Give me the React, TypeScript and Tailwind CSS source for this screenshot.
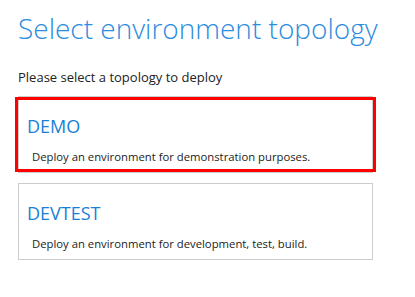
const topologies = [
  { name: 'DEMO', desc: 'Deploy an environment for demonstration purposes.', selected: true },
  { name: 'DEVTEST', desc: 'Deploy an environment for development, test, build.', selected: false },
]

export default function App() {
  return (
    <div
      className="h-[297px] w-[415px] bg-white px-[18px] pt-[8px] text-[#222]"
      style={{ fontFamily: '"Open Sans", "Noto Sans", sans-serif' }}
    >
      <h1 className="whitespace-nowrap text-[28px] leading-[40px] font-light text-[#2b8ce0]">
        Select environment topology
      </h1>
      <p className="mt-[20px] text-[13px] leading-[18px]">Please select a topology to deploy</p>

      <div className="mt-[10px] flex w-[355px] flex-col gap-[10px]">
        {topologies.map((t) => (
          <div key={t.name} className="relative h-[77px] border border-[#ccc] px-[8px] pt-[17px]">
            <div className="text-[18px] leading-[24px] text-[#1a7fd6]">{t.name}</div>
            <div className="mt-[11px] whitespace-nowrap pl-[5px] text-[11.3px] leading-[16px]">{t.desc}</div>
            {t.selected && (
              <div className="pointer-events-none absolute top-0 bottom-0 -left-[4px] -right-[4px] border-[3px] border-[#f00]" />
            )}
          </div>
        ))}
      </div>
    </div>
  )
}
